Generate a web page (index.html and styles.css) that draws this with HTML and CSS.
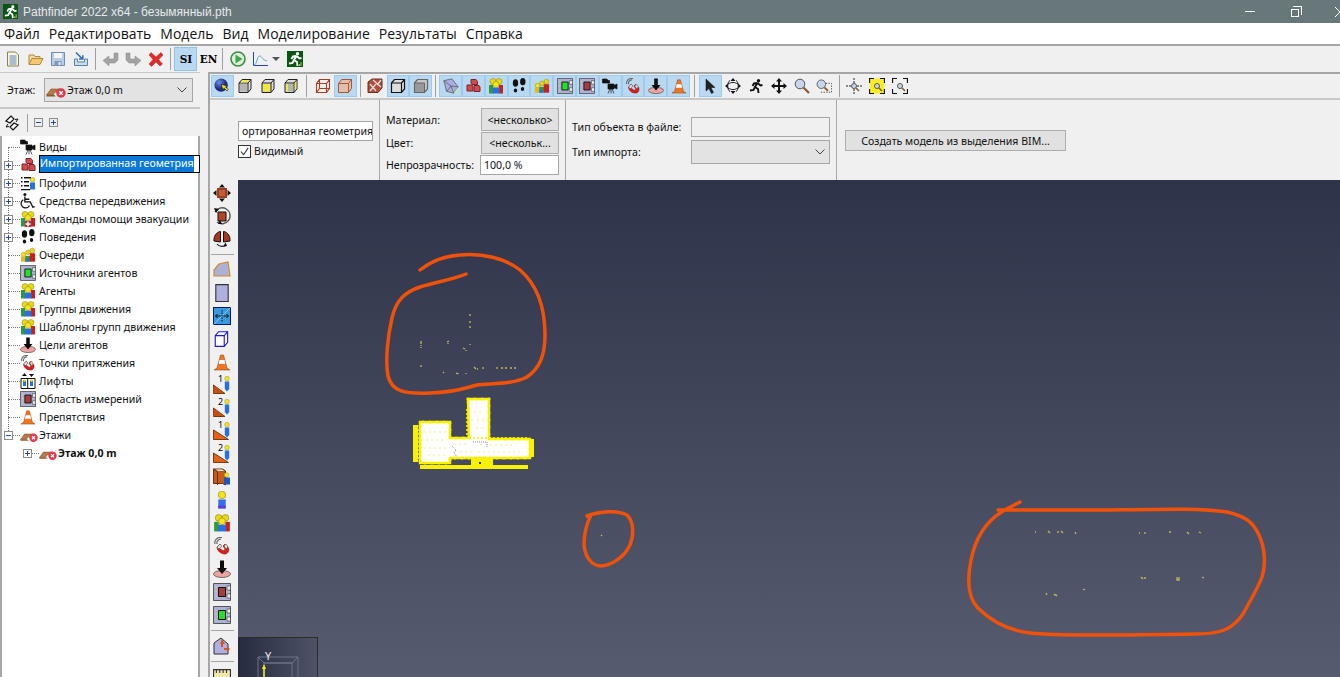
FILE: index.html
```html
<!DOCTYPE html>
<html lang="ru">
<head>
<meta charset="utf-8">
<title>Pathfinder 2022 x64 - безымянный.pth</title>
<link rel="stylesheet" href="styles.css">
</head>
<body>
<svg class="sprite" aria-hidden="true">
  <defs>
    <symbol id="run" viewBox="0 0 16 16"><circle cx="10.5" cy="2.8" r="1.7" fill="currentColor"/><path d="M9.5 5L7 9l3 2 .5 4M7 9l-1.5 3L2 12.5M9.5 5l3 2.5 2-.5M9.5 5L6 5.5 4.5 8" fill="none" stroke="currentColor" stroke-width="1.9"/></symbol>
    <symbol id="exit" viewBox="0 0 16 16"><rect width="16" height="16" fill="#0a5512"/><use href="#run" class="wh"/><path d="M12 15h1v-2h-1zM13.5 15h1v-4h-1z" fill="#a6d94a"/></symbol>
    <symbol id="doc" viewBox="0 0 16 16"><path d="M2.5 1h8l3 3v11h-11z" fill="#fbf6df" stroke="#8a7f55"/><path d="M4.5 5h7M4.5 7h7M4.5 9h7M4.5 11h7M4.5 13h7" stroke="#5c83bb"/></symbol>
    <symbol id="open" viewBox="0 0 16 16"><path d="M1 13V4h5l1 1.500h5V8" fill="#f3d69c" stroke="#b08a3f"/><path d="M1 13.500l3-6h11l-3 6z" fill="#f7c770" stroke="#b08a3f"/></symbol>
    <symbol id="save" viewBox="0 0 16 16"><path d="M1.500 1.500h13v13h-13z" fill="#b9cde6" stroke="#6f8cb3"/><path d="M4 2h8v5H4z" fill="#f4f6fa"/><path d="M4.500 10h7v4.500h-7z" fill="#8198b8"/><path d="M8.500 11h2v3h-2z" fill="#e7edf5"/></symbol>
    <symbol id="import" viewBox="0 0 16 16"><path d="M1.500 8v6.500h13V8h-3v3h-7V8z" fill="#cbdcf0" stroke="#5d7ea8"/><path d="M3 1.500L9.500 8M6 8h3.800V4.200" fill="none" stroke="#2c6fc0" stroke-width="1.600"/></symbol>
    <symbol id="undo" viewBox="0 0 16 16"><path d="M15 2v7l-3 3H6v3L0 9.500 6 5v3h4l1-1V2z" fill="#a3a3a3" stroke="#8b8b8b" stroke-width=".5"/></symbol>
    <symbol id="redo" viewBox="0 0 16 16"><path d="M1 2v7l3 3h6v3l6-5.500L10 5v3H6L5 7V2z" fill="#a3a3a3" stroke="#8b8b8b" stroke-width=".5"/></symbol>
    <symbol id="cross" viewBox="0 0 16 16"><path d="M3 1.500l5 4.500 5-4.500 2 2.500-4.500 4.500 4 4.500-2.500 2L8 11l-4.500 4.500L1 13l4-4.500L1 4z" fill="#e22a2a" stroke="#b71c1c" stroke-width=".5"/></symbol>
    <symbol id="play" viewBox="0 0 16 16"><circle cx="8" cy="8" r="7" fill="#dff0d8" stroke="#3c8c48" stroke-width="1.600"/><path d="M5.500 3.500l7 4.500-7 4.500z" fill="#3da84a"/></symbol>
    <symbol id="chart" viewBox="0 0 16 16"><path d="M1.500 1v13.500H16" fill="none" stroke="#2a3fb0"/><path d="M2 14c3 0 3-9 5.500-9S10 9 15 10" fill="none" stroke="#5aa0d8"/></symbol>
    <symbol id="sphere" viewBox="0 0 18 18"><defs><radialGradient id="gs" cx=".35" cy=".3"><stop offset="0" stop-color="#6f8fe6"/><stop offset="1" stop-color="#1c2a80"/></radialGradient></defs><circle cx="8" cy="8" r="7.500" fill="url(#gs)"/><path d="M8 7l2 6 1.500-1.500 3 3 1.500-1.500-3-3L15 9z" fill="#f5e51a" stroke="#222" stroke-width=".8"/></symbol>
    <symbol id="cube" viewBox="0 0 16 16"><path d="M2 5l3-3.500h9V11l-3 3.500H2z" fill="#ddd" stroke="#222"/><path d="M3 6h7v7.500H3z" fill="#b4b4b4"/><path d="M2 5h9v9.500M11 5l3-3.500" fill="none" stroke="#222"/></symbol>
    <symbol id="cubey" viewBox="0 0 16 16"><use href="#cube"/><path d="M3 6h7v7.500H3z" fill="#f2ea3a"/></symbol>
    <symbol id="cubet" viewBox="0 0 16 16"><use href="#cube"/><path d="M3.500 4.500l2-2.200h7l-2 2.200z" fill="#f2ea3a"/></symbol>
    <symbol id="cubel" viewBox="0 0 16 16"><use href="#cube"/><path d="M11.800 5l1.500-2v7.500l-1.500 2z" fill="#f2ea3a"/><path d="M3 6h2v7.500H3z" fill="#f2ea3a"/></symbol>
    <symbol id="wire" viewBox="0 0 16 16"><path d="M1.500 5.500h10v9h-10zM4.500 1.500h10v9h-10zM1.500 5.500l3-4M11.500 5.500l3-4M1.500 14.500l3-4M11.500 14.500l3-4" fill="none" stroke="#a8401f" stroke-width="1.100"/></symbol>
    <symbol id="solid" viewBox="0 0 16 16"><path d="M1.500 5.500l3-4h10v9l-3 4h-10z" fill="#e3bfa9" stroke="#a8583a"/><path d="M1.500 5.500h10v9M11.500 5.500l3-4" fill="none" stroke="#a8583a"/></symbol>
    <symbol id="texcube" viewBox="0 0 16 16"><path d="M1 4l4-3h10v9l-4 4.500H1z" fill="#a8503c" stroke="#6b3020"/><path d="M3 6l6 7M9 6l-6 7M6 2l8 7M14 2l-4 5" stroke="#e9ddd5" stroke-width="1.300"/></symbol>
    <symbol id="bcube" viewBox="0 0 16 16"><path d="M1.500 5l3-3.500h10V11l-3 3.500h-10z" fill="#ddd" stroke="#111" stroke-width="1.200"/><path d="M1.500 5h10v9.500M11.500 5l3-3.500" fill="none" stroke="#111" stroke-width="1.200"/></symbol>
    <symbol id="gcube" viewBox="0 0 16 16"><path d="M1.500 5l3-3.500h10V11l-3 3.500h-10z" fill="#c6c6c6" stroke="#666" stroke-width="1.200"/><path d="M1.500 5h10v9.500h-10z" fill="#999" stroke="#666"/></symbol>
    <symbol id="mesh" viewBox="0 0 18 18"><path d="M1 3l9-2 7 9-5 7-8-2z" fill="#a9aee0" stroke="#666"/><path d="M1 3l8 6 8 1M9 9l-5 6M9 9l3 8" fill="none" stroke="#555" stroke-width=".8"/><path d="M12 17l5-7v7z" fill="#b8eab8"/></symbol>
    <symbol id="bricks" viewBox="0 0 16 16"><path d="M6 1.500h5l1.500 2v3H7L6 5zM2 7h5l1 2v4H2zM9 7.500h5l1 1.500v4.500H9z" fill="#d2494e" stroke="#7d2326"/></symbol>
    <symbol id="people" viewBox="0 0 16 16"><circle cx="5" cy="3.500" r="3" fill="#e8d91a" stroke="#8a7c10" stroke-width=".5"/><circle cx="11" cy="3.500" r="3" fill="#e8d91a" stroke="#8a7c10" stroke-width=".5"/><path d="M1 7h4v8.500H1z" fill="#2f9a3a"/><path d="M11 7h4v8.500h-4z" fill="#c62020"/><path d="M4.500 9.500h7v6h-7z" fill="#2a6fe0"/><circle cx="8" cy="6.500" r="3" fill="#f5e71e" stroke="#8a7c10" stroke-width=".5"/></symbol>
    <symbol id="team" viewBox="0 0 16 16"><use href="#people"/><path d="M5 10h6v6H5z" fill="#d62222"/><path d="M7.200 10.500h1.600v5H7.200zM5.500 12.200h5v1.600h-5z" fill="#fff"/></symbol>
    <symbol id="person" viewBox="0 0 16 16"><circle cx="8" cy="3.500" r="3.300" fill="#f4e41c" stroke="#8a7c10" stroke-width=".5"/><path d="M4.700 7.500h6.600v8H4.700z" fill="#2f6ff0"/><path d="M4.700 13h6.600v2.500H4.700z" fill="#5a3fd0"/></symbol>
    <symbol id="feet" viewBox="0 0 16 16"><ellipse cx="4.500" cy="5" rx="2.700" ry="3.800" fill="#111"/><ellipse cx="4.500" cy="12.500" rx="1.700" ry="1.900" fill="#111"/><ellipse cx="11.800" cy="3.700" rx="2.700" ry="3.600" fill="#111"/><ellipse cx="11.500" cy="11" rx="1.700" ry="1.900" fill="#111"/></symbol>
    <symbol id="queue" viewBox="0 0 18 16"><circle cx="14" cy="3" r="2.600" fill="#e8d91a" stroke="#8a7c10" stroke-width=".5"/><circle cx="9" cy="5" r="2.600" fill="#e8d91a" stroke="#8a7c10" stroke-width=".5"/><circle cx="4" cy="7.500" r="2.600" fill="#f2e41c" stroke="#8a7c10" stroke-width=".5"/><path d="M1 10h6v5.500H1z" fill="#e4b81a"/><path d="M6 9h6v6.500H6z" fill="#2f9a3a"/><path d="M11 6h6v9.500h-6z" fill="#c62020"/><path d="M6 12h4v3.500H6z" fill="#2a6fe0"/></symbol>
    <symbol id="src" viewBox="0 0 18 18"><path d="M.5.500h17v17H.5z" fill="#aeb1d6" stroke="#555"/><path d="M5.500 4.500h7v9h-7z" fill="#24e02c" stroke="#111"/><path d="M14 3h3.500v4H14zM14 11h3.500v4H14z" fill="#eee" stroke="#333" stroke-width=".6"/><path d="M2.500 3.500h1v1h-1zM2.500 8h1v1h-1zM2.500 13h1v1h-1z" fill="#f5e51a"/></symbol>
    <symbol id="meas" viewBox="0 0 18 18"><path d="M.5.500h17v17H.5z" fill="#aeb1d6" stroke="#555"/><path d="M5.500 4.500h7v9h-7z" fill="#a83c3c" stroke="#111"/><path d="M14 3h3.500v4H14zM14 11h3.500v4H14z" fill="#eee" stroke="#333" stroke-width=".6"/><path d="M2.500 3.500h1v1h-1zM2.500 8h1v1h-1zM2.500 13h1v1h-1z" fill="#f5e51a"/></symbol>
    <symbol id="cam" viewBox="0 0 16 16"><path d="M.5 1h4l2 1.500h1V5H.5zM6 6h6v1.500l3-1.500v5l-3-1.500V11H6zM8 11l-2 4.500M9 11v4.500M10 11l2 4.500" fill="#111" stroke="#111" stroke-width=".7"/></symbol>
    <symbol id="magnet" viewBox="0 0 18 18"><path d="M7 7l-3 3c0 4 4 7 8 7 3 0 5-4 3-7l-3-3-2 2 2 3c0 2-2 2-3 1l-3-2 2-2z" fill="#d81e1e" stroke="#8a1010" stroke-width=".6"/><path d="M7 7l-3 3 2 2 3-3zM13 7l-2 2 2 3 2-2z" fill="#ddd" stroke="#444" stroke-width=".5"/><path d="M4 7C3.500 4 5 2.500 8 2M2 7C1 3 4 0 9 .5" fill="none" stroke="#666" stroke-width="1.200"/></symbol>
    <symbol id="goal" viewBox="0 0 18 18"><ellipse cx="9" cy="14" rx="8.500" ry="3.500" fill="#eea3a3" stroke="#554" stroke-width=".8"/><path d="M7 .5h4V8h3l-5 6-5-6h3z" fill="#0a0a0a"/></symbol>
    <symbol id="cone" viewBox="0 0 18 18"><path d="M1 17l3-2 3.500-13h3L14 15l3 2z" fill="#f0751e" stroke="#7a3a10" stroke-width=".5"/><path d="M6.500 7h5l1 4h-7z" fill="#fff"/></symbol>
    <symbol id="arrow" viewBox="0 0 16 16"><path d="M4 1v12l3-2.500 2.500 5 2-1-2.500-5h4z" fill="#222" stroke="#111" stroke-width=".5"/></symbol>
    <symbol id="orbit" viewBox="0 0 16 16"><path d="M8 0l2.500 3h-5zM8 16l2.500-3h-5zM0 8l3-2.500v5zM16 8l-3-2.500v5z" fill="#111"/><path d="M5 2.500C2 4 2 12 5 13.500M11 2.500c3 1.500 3 9.500 0 11M3 6c4-2 6-2 10 0M3 10c4 2 6 2 10 0" fill="#fff" stroke="#111"/></symbol>
    <symbol id="runner" viewBox="0 0 16 16"><use href="#run" class="bk"/></symbol>
    <symbol id="pan" viewBox="0 0 16 16"><path d="M8 0l3 3.500H9V7h3.500V5L16 8l-3.500 3V9H9v3.500h2L8 16l-3-3.500h2V9H3.500v2L0 8l3.500-3v2H7V3.500H5z" fill="#111"/></symbol>
    <symbol id="zoomi" viewBox="0 0 16 16"><circle cx="6" cy="6" r="4.800" fill="#c7d6ee" stroke="#555"/><path d="M9.500 9.500l5.500 5.500" stroke="#8a5a2c" stroke-width="2.200"/></symbol>
    <symbol id="zoomsel" viewBox="0 0 18 16"><path d="M8 5h9.500v10H5" fill="none" stroke="#444" stroke-dasharray="1.500 1.500"/><circle cx="6" cy="6" r="4.800" fill="#c7d6ee" stroke="#555"/><path d="M9.500 9.500l4 4" stroke="#8a5a2c" stroke-width="2.200"/></symbol>
    <symbol id="zoomtiny" viewBox="0 0 16 16"><circle cx="8" cy="8" r="2.500" fill="#c7d6ee" stroke="#555"/><path d="M10 10l3 3" stroke="#8a5a2c" stroke-width="1.600"/></symbol>
    <symbol id="crosshair" viewBox="0 0 16 16"><path d="M8 0v5M8 11v5M0 8h5M11 8h5" stroke="#222" stroke-dasharray="2 1"/><use href="#zoomtiny"/></symbol>
    <symbol id="fity" viewBox="0 0 16 16"><path d="M.5.500h15v15H.5z" fill="#f6ee22"/><path d="M.5 5V.5H5M11 .5h4.500V5M15.500 11v4.500H11M5 15.500H.5V11" fill="none" stroke="#111" stroke-width="1.200"/><use href="#zoomtiny"/></symbol>
    <symbol id="fitw" viewBox="0 0 16 16"><path d="M.5 5V.5H5M11 .5h4.500V5M15.500 11v4.500H11M5 15.500H.5V11" fill="none" stroke="#111" stroke-width="1.200"/><use href="#zoomtiny"/></symbol>
    <symbol id="floor" viewBox="0 0 20 16"><path d="M.5 13L5 7h10l-1 3H9l-2 3z" fill="#b5794a" stroke="#7a4c28" stroke-width=".6"/><path d="M.5 13h8l1 1.500H.5z" fill="#8f5a32"/><circle cx="15" cy="11" r="4.700" fill="#df3a4a"/><path d="M13.300 9.300l3.400 3.400M16.700 9.300l-3.400 3.400" stroke="#fff" stroke-width="1.300"/></symbol>
    <symbol id="chair" viewBox="0 0 18 18"><circle cx="5.500" cy="1.800" r="1.700" fill="#111"/><path d="M5.500 4v6h6l3 6 2-.8M5.500 7h5" fill="none" stroke="#111" stroke-width="1.500"/><path d="M3.700 7.500a5 5 0 1 0 7 6.500" fill="none" stroke="#111" stroke-width="1.400"/></symbol>
    <symbol id="prof" viewBox="0 0 16 16"><path d="M1 2h1.500v1.500H1zM1 6h1.500v1.500H1zM1 10h1.500v1.500H1zM4 2h7v1.500H4zM4 6h5v1.500H4zM4 10h5v1.500H4zM1 14h9v1.200H1z" fill="#111"/><circle cx="12.500" cy="4.800" r="2.300" fill="#f2e41c" stroke="#8a7c10" stroke-width=".5"/><path d="M10 7.500h5v7h-5z" fill="#2a6fe0"/></symbol>
    <symbol id="lift" viewBox="0 0 16 16"><path d="M1 5.500h14v10H1z" fill="#fff" stroke="#111"/><path d="M7.700 5.500v10" stroke="#111"/><path d="M3 7h3v6H3zM10 7h3v6h-3z" fill="#2a6fe0"/><circle cx="4.500" cy="7.500" r="1.300" fill="#f2e41c"/><circle cx="11.500" cy="7.500" r="1.300" fill="#f2e41c"/><path d="M4.500 0L7 3H2zM11.500 4L9 1h5z" fill="#111"/></symbol>
    <symbol id="mv" viewBox="0 0 18 18"><path d="M9 0l3 3.500H6zM9 18l3-3.500H6zM0 9l3.500-3v6zM18 9l-3.500-3v6z" fill="#111"/><path d="M4 4h10v10H4z" fill="#9c3e22"/><path d="M6 6h6v6H6z" fill="#c85a36"/></symbol>
    <symbol id="rot" viewBox="0 0 18 18"><path d="M5 5h8v9H5z" fill="#b8431f" stroke="#111"/><path d="M2 5a8 8 0 1 1 2 10" fill="none" stroke="#555" stroke-width="1.400"/><path d="M1 1l5 1-3 4zM5 17l2-4 2 4z" fill="#111"/></symbol>
    <symbol id="mir" viewBox="0 0 18 18"><path d="M7.500 1.500C3 2 .5 7 1 11l6.500 1zM10.500 1.500C15 2 17.500 7 17 11l-6.500 1z" fill="#a6391e" stroke="#111"/><path d="M4 14c2 3 7 3 9 .5" fill="none" stroke="#222" stroke-width="1.200"/><path d="M10 17l4-1-1.500-3.500z" fill="#111"/></symbol>
    <symbol id="room" viewBox="0 0 18 18"><path d="M1 15V9l5-6 9-2 2 14z" fill="#aeb1d6" stroke="#d08a2a" stroke-width="1.200"/></symbol>
    <symbol id="rect" viewBox="0 0 16 16"><path d="M2.500.5h11v15h-11z" fill="#aeb1e0" stroke="#333"/></symbol>
    <symbol id="door" viewBox="0 0 18 18"><rect x=".5" y=".5" width="17" height="17" fill="#3a9adf" stroke="#0a1a66"/><path d="M.5 17.500l17-17" stroke="#7fc4ef"/><path d="M9 3l0 12" stroke="#111" stroke-dasharray="1.500 1"/><path d="M7.500 9H2.500m2-2l-2 2 2 2M10.500 9h5m-2-2l2 2-2 2" fill="none" stroke="#111"/></symbol>
    <symbol id="thin" viewBox="0 0 16 16"><path d="M2 5l3-3.500h8V11l-3 3.500H2z" fill="#fff" stroke="#1a1ad0"/><path d="M2 5h8v9.500M10 5l3-3.500" fill="none" stroke="#1a1ad0"/></symbol>
    <symbol id="ramp" viewBox="0 0 18 18"><path d="M.5 17.500V9L12 17.500z" fill="#e2641a" stroke="#7a3a10"/><path d="M.5 17V11h3v2h3v2h3v2z" fill="#c44f10"/><circle cx="14" cy="2.600" r="2.300" fill="#f2e41c" stroke="#8a7c10" stroke-width=".4"/><path d="M11.800 5.500h4.400v7.500l-2.200 2.500-2.200-2.500z" fill="#2a6fe0"/></symbol>
    <symbol id="slope" viewBox="0 0 18 18"><path d="M.5 17.500V8l15 9.500z" fill="#e2641a" stroke="#7a3a10"/><circle cx="14" cy="2.600" r="2.300" fill="#f2e41c" stroke="#8a7c10" stroke-width=".4"/><path d="M11.800 5.500h4.400v7.500l-2.200 2.500-2.200-2.500z" fill="#2a6fe0"/></symbol>
    <symbol id="book" viewBox="0 0 18 18"><path d="M.5 1h9l3 2v14l-3-1.500H.5z" fill="#c55a1a" stroke="#6b3010"/><path d="M.5 1l4 3v13" fill="none" stroke="#6b3010"/><path d="M2 1.500h7l2 1.500H6z" fill="#fff"/><circle cx="13.500" cy="7" r="2.300" fill="#f2e41c" stroke="#8a7c10" stroke-width=".4"/><path d="M11 9.500h6v7h-6z" fill="#1f55c0"/></symbol>
    <symbol id="place" viewBox="0 0 18 18"><path d="M1 6l7-5 7 6v10H1z" fill="#aeb1e0" stroke="#333"/><path d="M7 7l2-5 3 5h-2v3H8V7zM11 11h3V9l3 3-3 3v-2h-3z" fill="#d8541e"/></symbol>
    <symbol id="ruler" viewBox="0 0 16 8"><path d="M.5.500h15v8H.5z" fill="#f3e7b0" stroke="#333"/><path d="M3 .5v3M6 .5v3M9 .5v3M12 .5v3" stroke="#333"/></symbol>
    <symbol id="sync" viewBox="0 0 16 16"><path d="M2 6l5-5 3 3-4 4zM14 10l-5 5-3-3 4-4z" fill="#fff" stroke="#111" stroke-width="1.200"/><path d="M4 9l-2 3 3-.5M12 7l2-3-3 .5" fill="none" stroke="#111"/></symbol>
  </defs>
</svg>

<div class="app">
  <header class="titlebar">
    <svg class="title-ico"><use href="#exit"/></svg>
    <span class="title-text">Pathfinder 2022 x64 - безымянный.pth</span>
    <div class="winctl">
      <span class="win-min"></span>
      <span class="win-max"></span>
      <span class="win-close">
        <svg class="close-ico" viewBox="0 0 12 12"><path d="M0 0l12 12M12 0L0 12"/></svg>
      </span>
    </div>
  </header>

  <nav class="menubar">
    <span>Файл</span><span>Редактировать</span><span>Модель</span><span>Вид</span><span>Моделирование</span><span>Результаты</span><span>Справка</span>
  </nav>

  <div class="maintools">
    <svg class="ti"><use href="#doc"/></svg>
    <svg class="ti"><use href="#open"/></svg>
    <svg class="ti"><use href="#save"/></svg>
    <svg class="ti"><use href="#import"/></svg>
    <i class="vsep"></i>
    <svg class="ti"><use href="#undo"/></svg>
    <svg class="ti"><use href="#redo"/></svg>
    <svg class="ti"><use href="#cross"/></svg>
    <i class="vsep"></i>
    <span class="unit unit-on">SI</span>
    <span class="unit unit-en">EN</span>
    <i class="vsep"></i>
    <svg class="ti"><use href="#play"/></svg>
    <svg class="ti"><use href="#chart"/></svg>
    <span class="drop"></span>
    <svg class="ti"><use href="#exit"/></svg>
  </div>

  <div class="body">
    <aside class="sidebar">
      <div class="floorbar">
        <span class="floor-label">Этаж:</span>
        <div class="combo">
          <svg class="floor-ico"><use href="#floor"/></svg>
          <span>Этаж 0,0 m</span>
          <svg class="chev" viewBox="0 0 10 6"><path d="M.5.5L5 5 9.500.5"/></svg>
        </div>
      </div>
      <div class="treebar">
        <svg class="sync-ico"><use href="#sync"/></svg>
        <i class="vsep vsep-tree"></i>
        <span class="box box-tool minus"></span>
        <span class="box box-tool plus"></span>
      </div>
      <ul class="tree">
        <li class="row"><span class="twig"><i class="dash"></i></span><svg class="ni"><use href="#cam"/></svg><span>Виды</span></li>
        <li class="row"><span class="twig"><i class="box plus"></i><i class="dash"></i></span><svg class="ni"><use href="#bricks"/></svg><span class="editing">Импортированная геометрия</span></li>
        <li class="row"><span class="twig"><i class="box plus"></i><i class="dash"></i></span><svg class="ni"><use href="#prof"/></svg><span>Профили</span></li>
        <li class="row"><span class="twig"><i class="box plus"></i><i class="dash"></i></span><svg class="ni"><use href="#chair"/></svg><span>Средства передвижения</span></li>
        <li class="row"><span class="twig"><i class="box plus"></i><i class="dash"></i></span><svg class="ni"><use href="#team"/></svg><span>Команды помощи эвакуации</span></li>
        <li class="row"><span class="twig"><i class="box plus"></i><i class="dash"></i></span><svg class="ni"><use href="#feet"/></svg><span>Поведения</span></li>
        <li class="row"><span class="twig"><i class="dash"></i></span><svg class="ni"><use href="#queue"/></svg><span>Очереди</span></li>
        <li class="row"><span class="twig"><i class="dash"></i></span><svg class="ni"><use href="#src"/></svg><span>Источники агентов</span></li>
        <li class="row"><span class="twig"><i class="dash"></i></span><svg class="ni"><use href="#people"/></svg><span>Агенты</span></li>
        <li class="row"><span class="twig"><i class="dash"></i></span><svg class="ni"><use href="#people"/></svg><span>Группы движения</span></li>
        <li class="row"><span class="twig"><i class="dash"></i></span><svg class="ni"><use href="#people"/></svg><span>Шаблоны групп движения</span></li>
        <li class="row"><span class="twig"><i class="dash"></i></span><svg class="ni"><use href="#goal"/></svg><span>Цели агентов</span></li>
        <li class="row"><span class="twig"><i class="dash"></i></span><svg class="ni"><use href="#magnet"/></svg><span>Точки притяжения</span></li>
        <li class="row"><span class="twig"><i class="dash"></i></span><svg class="ni"><use href="#lift"/></svg><span>Лифты</span></li>
        <li class="row"><span class="twig"><i class="dash"></i></span><svg class="ni"><use href="#meas"/></svg><span>Область измерений</span></li>
        <li class="row"><span class="twig"><i class="dash"></i></span><svg class="ni"><use href="#cone"/></svg><span>Препятствия</span></li>
        <li class="row"><span class="twig"><i class="box minus"></i><i class="dash"></i></span><svg class="ni ni-floor"><use href="#floor"/></svg><span>Этажи</span></li>
        <li class="row row-child"><span class="twig"><i class="box plus"></i><i class="dash"></i></span><svg class="ni ni-floor"><use href="#floor"/></svg><b>Этаж 0,0 m</b></li>
      </ul>
    </aside>

    <main class="workspace">
      <div class="viewtools">
        <span class="tb on"><svg><use href="#sphere"/></svg></span>
        <span class="tb"><svg><use href="#cubet"/></svg></span>
        <span class="tb"><svg><use href="#cubey"/></svg></span>
        <span class="tb"><svg><use href="#cubel"/></svg></span>
        <i class="vsep vsep-wide"></i>
        <span class="tb"><svg><use href="#wire"/></svg></span>
        <span class="tb on"><svg><use href="#solid"/></svg></span>
        <i class="vsep"></i>
        <span class="tb"><svg><use href="#texcube"/></svg></span>
        <span class="tb on"><svg><use href="#bcube"/></svg></span>
        <span class="tb on"><svg><use href="#gcube"/></svg></span>
        <i class="vsep"></i>
        <span class="tb on"><svg><use href="#mesh"/></svg></span>
        <span class="tb on"><svg><use href="#bricks"/></svg></span>
        <span class="tb on"><svg><use href="#people"/></svg></span>
        <span class="tb on"><svg><use href="#feet"/></svg></span>
        <span class="tb on"><svg><use href="#queue"/></svg></span>
        <span class="tb on"><svg><use href="#src"/></svg></span>
        <span class="tb on"><svg><use href="#meas"/></svg></span>
        <span class="tb on"><svg><use href="#cam"/></svg></span>
        <span class="tb on"><svg><use href="#magnet"/></svg></span>
        <span class="tb on"><svg><use href="#goal"/></svg></span>
        <span class="tb on"><svg><use href="#cone"/></svg></span>
        <i class="vsep vsep-wide"></i>
        <span class="tb on"><svg><use href="#arrow"/></svg></span>
        <span class="tb"><svg><use href="#orbit"/></svg></span>
        <span class="tb"><svg><use href="#runner"/></svg></span>
        <span class="tb"><svg><use href="#pan"/></svg></span>
        <span class="tb"><svg><use href="#zoomi"/></svg></span>
        <span class="tb"><svg><use href="#zoomsel"/></svg></span>
        <i class="vsep"></i>
        <span class="tb"><svg><use href="#crosshair"/></svg></span>
        <span class="tb"><svg><use href="#fity"/></svg></span>
        <span class="tb"><svg><use href="#fitw"/></svg></span>
      </div>

      <section class="props">
        <div class="prop prop-name">
          <span class="field name-field">ортированная геометрия</span>
          <label class="check"><span class="checkbox"><svg viewBox="0 0 12 12"><path d="M2 6l3 3.500L10 2"/></svg></span>Видимый</label>
        </div>
        <div class="prop prop-mat">
          <span>Материал:</span><span class="btn btn-sm">&lt;несколько&gt;</span>
          <span>Цвет:</span><span class="btn btn-sm">&lt;нескольк...</span>
          <span>Непрозрачность:</span><span class="field op-field">100,0 %</span>
        </div>
        <div class="prop prop-type">
          <span>Тип объекта в файле:</span><span class="field field-ro"></span>
          <span>Тип импорта:</span>
          <span class="field field-sel"><svg class="chev" viewBox="0 0 10 6"><path d="M.5.5L5 5 9.500.5"/></svg></span>
        </div>
        <div class="prop prop-bim">
          <span class="btn btn-bim">Создать модель из выделения BIM...</span>
        </div>
      </section>

      <div class="stage">
        <div class="sidetools">
          <svg><use href="#mv"/></svg>
          <svg><use href="#rot"/></svg>
          <svg><use href="#mir"/></svg>
          <i class="hsep"></i>
          <svg><use href="#room"/></svg>
          <svg><use href="#rect"/></svg>
          <svg><use href="#door"/></svg>
          <svg><use href="#thin"/></svg>
          <svg><use href="#cone"/></svg>
          <span class="numbered"><svg><use href="#ramp"/></svg><em>1</em></span>
          <span class="numbered"><svg><use href="#ramp"/></svg><em>2</em></span>
          <span class="numbered"><svg><use href="#slope"/></svg><em>1</em></span>
          <span class="numbered"><svg><use href="#slope"/></svg><em>2</em></span>
          <svg><use href="#book"/></svg>
          <svg><use href="#person"/></svg>
          <svg><use href="#people"/></svg>
          <svg><use href="#magnet"/></svg>
          <svg><use href="#goal"/></svg>
          <svg><use href="#meas"/></svg>
          <svg><use href="#src"/></svg>
          <i class="hsep"></i>
          <svg><use href="#place"/></svg>
          <i class="hsep"></i>
          <svg class="ruler-ico"><use href="#ruler"/></svg>
        </div>
        <div class="viewport">
          <svg class="scene" viewBox="238 180 1102 497">
            <defs>
              <linearGradient id="inset" x1="0" x2="1" y1="0" y2="0"><stop offset="0" stop-color="#272b41"/><stop offset="1" stop-color="#4e5367"/></linearGradient>
            </defs>
            <!-- building -->
            <path class="bld-solid" d="M413 425h5v37h-5zM530 439h4v18h-4zM420 465h108v4H420zM471 458h22v11h-22z"/>
            <path class="bld-body" d="M468 399h21v40h41v19h-80v5h-30v-41h30v16h19z"/>
            <path class="bld-rough" d="M468 399h21v40h41v19h-80v5h-30v-41h30v16h19z"/>
            <path class="bld-rough bld-rough-b" d="M468 399h21M467 410v28M489 420v18M450 423v8M419 430v30M470 438h60M450 458h20M495 458h35"/>
            <path class="bld-det" d="M424 432h24M426 440h20M424 448h22M428 455h18M474 412h10M472 420h12M476 428h8M454 444h12M460 452h14M480 445h36M478 452h44"/>
            <path class="bld-gray" d="M452 446l4 4-2 3 3 4M473 442h14v6"/>
            <rect class="bld-hole" x="479" y="462" width="2" height="2"/>
            <!-- specks -->
            <path class="specks" d="M470 314v2M470 321v2M470 326v2M421 341v3M421 345v1M421 347v1M447 342l2-1M448 343v1M470 344v1M463 348l2 1M466 350v1M421 367v-2M443 372l1 1M456 373l2 1M458 373v1M466 373v1M474 367l2 2M477 369h1M483 367v2M497 367v2M501 368h2M505 368h2M510 368h2M514 368h2M1035 532h1M1048 531l2 2M1058 531v2M1061 531l2 2M1075 532l1 2M1139 533h1M1145 532v2M1169 532h2M1187 532l2 2M1199 532l2 1M1141 577l2 2M1144 578h2M1177 577v3h2v-3M1202 577l2 1M1083 590l2-1M1046 593l1 2M1054 594l1 1h1l1 1M601 535l1 1"/>
            <!-- annotations -->
            <g class="ink">
              <path d="M420 270C430 262 442 256 460 255C482 253 505 258 520 270C535 283 545 305 545 335C545 355 540 368 527 377C512 385 490 383 477 385C465 388 458 392 430 393C405 394 392 392 388 376C385 360 388 335 392 318C396 300 405 292 420 287C435 282 452 280 466 274"/>
              <path d="M587 516C600 511 618 510 627 515C634 522 634 535 630 545C625 556 612 566 600 566C590 565 585 555 584 545C584 535 586 525 591 515"/>
              <path d="M1020 502L1003 511C985 522 975 540 971 560C967 580 968 598 978 608C990 620 1005 630 1030 633C1060 636 1120 635 1195 634C1220 634 1232 630 1243 614C1250 601 1258 588 1262 577C1266 565 1265 548 1259 535C1253 522 1245 516 1227 512C1200 508 1170 509 1100 510L998 510"/>
            </g>
            <!-- axis inset -->
            <rect class="inset" x="238.500" y="637.500" width="79" height="50"/>
            <path class="inset-box" d="M258 685v-28h40v28M264 685v-22h28v22M258 657l6 6M298 657l-6 6M264 663h28"/>
            <path class="inset-axis" d="M264 668v12"/>
            <path class="inset-tip" d="M264 664l2 5h-4z"/>
            <text class="inset-label" x="268" y="660">Y</text>
          </svg>
        </div>
      </div>
    </main>
  </div>
</div>
</body>
</html>
```
FILE: styles.css
```css
* { box-sizing: border-box; }
html, body { margin: 0; height: 100%; overflow: hidden; }
body { font: 10.6px "Noto Sans", "Liberation Sans", sans-serif; color: #111; background: #f0f0f0; }
.sprite { position: absolute; width: 0; height: 0; }
.wh { color: #fff; }
.bk { color: #111; }
svg { display: block; flex: none; }
ul { list-style: none; margin: 0; padding: 0; }
i, em { font-style: normal; }

.app { width: 1340px; height: 677px; display: flex; flex-direction: column; overflow: hidden; }

/* title bar */
.titlebar { height: 23px; flex: none; background: #68777a; color: #e6eaea; display: flex; align-items: center; padding-left: 3px; }
.title-ico { width: 15px; height: 15px; }
.title-text { margin-left: 5px; font: 12px "Liberation Sans", sans-serif; }
.winctl { margin-left: auto; display: flex; align-items: center; height: 100%; }
.win-min { width: 10px; height: 1px; background: #fff; margin-right: 36px; }
.win-max { width: 8px; height: 8px; border: 1px solid #fff; margin: 3px 36px 0 0; position: relative; }
.win-max::after { content: ""; position: absolute; left: 1px; top: -4px; width: 8px; height: 8px; border-top: 1px solid #fff; border-right: 1px solid #fff; }
.win-close { width: 5px; height: 10px; overflow: hidden; display: block; }
.close-ico { width: 10px; height: 10px; }
.close-ico path { stroke: #fff; stroke-width: 1.200; fill: none; }

/* menu */
.menubar { height: 23px; flex: none; background: #fff; border-bottom: 2px solid #a6a6a6; display: flex; gap: 9px; align-items: center; padding: 0 0 0 4px; font: 14px "Open Sans", "Noto Sans", sans-serif; color: #111; }

/* main toolbar */
.maintools { height: 26px; flex: none; display: flex; align-items: center; padding-left: 1.650px; }
.ti { width: 16px; height: 16px; margin: 0 3.350px; }
.vsep { width: 1px; height: 22px; background: #a0a0a0; margin: 0 3px; flex: none; }
.unit { width: 23px; height: 24px; display: flex; align-items: center; justify-content: center; font: bold 10.500px "DejaVu Serif", serif; color: #000; border: 1px solid transparent; flex: none; }
.unit-en { width: 22px; }
.unit-on { background: #b9d8f2; border-color: #8ec5f0; }
.drop { width: 8px; height: 0; border: 4px solid transparent; border-top: 4px solid #555; border-bottom: 0; margin: 0 4px 0 0; flex: none; }

/* body */
.body { flex: 1; display: flex; min-height: 0; }
.sidebar { width: 200px; flex: none; display: flex; flex-direction: column; border-top: 1px solid #c8c8c8; }

.floorbar { height: 36px; flex: none; display: flex; align-items: center; padding: 0 7px; border-bottom: 2px solid #c8c8c8; }
.floor-label { width: 37px; flex: none; }
.combo { width: 149px; height: 24px; background: #e3e3e3; border: 1px solid #a6a6a6; display: flex; align-items: center; padding: 0 5px 0 1px; gap: 1px; }
.floor-ico { width: 20px; height: 16px; }
.chev { width: 10px; height: 6px; margin-left: auto; }
.chev path { fill: none; stroke: #444; }

.treebar { height: 27px; flex: none; display: flex; align-items: center; padding-left: 4px; }
.sync-ico { width: 16px; height: 16px; }
.vsep-tree { height: 18px; margin: 0 6px 0 7px; }
.box { width: 9px; height: 9px; border: 1px solid #8c8c8c; background: #fff; display: block; position: relative; flex: none; }
.box-tool { margin-right: 6px; background: #eee; }
.minus::before, .plus::before { content: ""; position: absolute; left: 1px; top: 3px; width: 5px; height: 1px; background: #2d4b8c; }
.plus::after { content: ""; position: absolute; left: 3px; top: 1px; width: 1px; height: 5px; background: #2d4b8c; }

.tree { flex: 1; background: #fff; border: 2px solid #a6a6a6; border-width: 0 2px 0 2px; padding-top: 2px; position: relative; }
.tree::before { content: ""; position: absolute; left: 6px; top: 11px; height: 288px; border-left: 1px dotted #777; }
.row { height: 18px; display: flex; align-items: center; white-space: nowrap; position: relative; }
.twig { width: 18px; flex: none; display: flex; align-items: center; padding-left: 2px; }
.twig:not(:has(.box)) { padding-left: 6px; }
.dash { flex: 1; border-top: 1px dotted #777; }
.ni { width: 16px; height: 16px; margin-right: 3px; }
.ni-floor { width: 18px; margin-right: 1px; }
.row:not(.row-child) .ni-floor { margin-left: 0; }
.row-child { padding-left: 19px; }
.editing { background: #0a78d7; color: #fff; outline: 1px solid #000; outline-offset: -1px; height: 18px; line-height: 17px; padding: 0 6px 0 1px; margin-top: -2px; box-shadow: inset -6px 0 0 #fff; }

/* workspace */
.workspace { flex: 1; margin-left: 8px; min-width: 0; display: flex; flex-direction: column; border-left: 2px solid #a6a6a6; border-top: 2px solid #a6a6a6; }

.viewtools { height: 26px; flex: none; display: flex; align-items: center; padding-left: 1px; border-bottom: 2px solid #c8c8c8; }
.tb { width: 22.800px; height: 22px; display: flex; align-items: center; justify-content: center; border: 1px solid transparent; flex: none; }
.tb svg { width: 16px; height: 16px; }
.tb.on { background: #b9d8f2; border-color: #9ccbf0; }
.viewtools .vsep { margin: 0 3px; }
.viewtools .vsep-wide { margin: 0 4px; }

.props { height: 80px; flex: none; display: flex; }
.prop { border-right: 1px solid #a6a6a6; height: 100%; }
.prop-name { width: 170px; padding: 21px 0 0 28px; }
.field { background: #fff; border: 1px solid #a6a6a6; display: flex; align-items: center; padding: 0 3px; }
.name-field { width: 135px; height: 20px; white-space: nowrap; overflow: hidden; }
.check { display: flex; align-items: center; gap: 3px; margin-top: 4px; height: 13px; line-height: 13px; }
.checkbox { width: 13px; height: 13px; background: #fff; border: 1px solid #333; }
.checkbox svg { width: 11px; height: 11px; }
.checkbox path { fill: none; stroke: #333; stroke-width: 1.200; }

.prop-mat { width: 186px; padding: 8px 5px 0 6px; display: grid; grid-template-columns: 95px 78px; grid-auto-rows: min-content; row-gap: 1px; align-items: center; }
.btn { background: #e1e1e1; border: 1px solid #adadad; display: flex; align-items: center; justify-content: center; white-space: nowrap; }
.btn-sm { height: 23px; }
.prop-mat .btn-sm:nth-of-type(4) { height: 22px; }
.op-field { height: 20px; width: 79px; margin-left: -1px; }

.prop-type { width: 271px; padding: 17px 6px 0 6px; display: grid; grid-template-columns: 119px 139px; grid-auto-rows: min-content; row-gap: 3px; align-items: center; }
.field-ro { height: 20px; background: #f0f0f0; }
.field-sel { height: 24px; background: #e3e3e3; padding-right: 4px; }

.prop-bim { border-right: 0; flex: 1; padding: 30px 0 0 8px; }
.btn-bim { width: 221px; height: 21px; }

/* stage */
.stage { flex: 1; display: flex; min-height: 0; }
.sidetools { width: 28px; flex: none; display: flex; flex-direction: column; align-items: center; padding: 4px 4px 0 0; gap: 5px; overflow: hidden; }
.sidetools > svg, .numbered svg { width: 18px; height: 18px; }
.numbered { position: relative; display: block; flex: none; }
.numbered em { position: absolute; left: 5px; top: -2px; font-size: 9px; line-height: 10px; color: #000; }
.hsep { width: 23px; height: 1px; background: #a6a6a6; flex: none; margin: 1px 0; }
.sidetools .ruler-ico { height: 9px; margin-top: 1px; }

.viewport { flex: 1; position: relative; background: linear-gradient(180deg, #2e3349 0%, #565b70 100%); min-width: 0; }
.scene { position: absolute; inset: 0; width: 100%; height: 100%; }

.ink path { fill: none; stroke: #f15208; stroke-width: 3.500; stroke-linecap: round; stroke-linejoin: round; }
.bld-solid { fill: #f8f200; }
.bld-body { fill: #fff; stroke: #f8f200; stroke-width: 2.500; }
.bld-rough { fill: none; stroke: #f8f200; stroke-width: 3; stroke-linecap: round; stroke-dasharray: 0 7; }
.bld-rough-b { stroke-width: 2.200; stroke-dasharray: 0 4; }
.bld-det { fill: none; stroke: #f3ef8a; stroke-width: 1; stroke-dasharray: 2 3; }
.bld-gray { fill: none; stroke: #8f8f9c; stroke-width: 1; stroke-dasharray: 1 1; }
.bld-hole { fill: #333; }
.specks { fill: none; stroke: #bdb955; stroke-width: 1.300; }
.inset { fill: url(#inset); stroke: #2c2b26; }
.inset-box { fill: none; stroke: #6d7286; }
.inset-axis { stroke: #f2f01e; stroke-width: 1.500; }
.inset-tip { fill: #f2f01e; }
.inset-label { font: 11px "Noto Sans", sans-serif; fill: #eee; text-anchor: middle; }
```
